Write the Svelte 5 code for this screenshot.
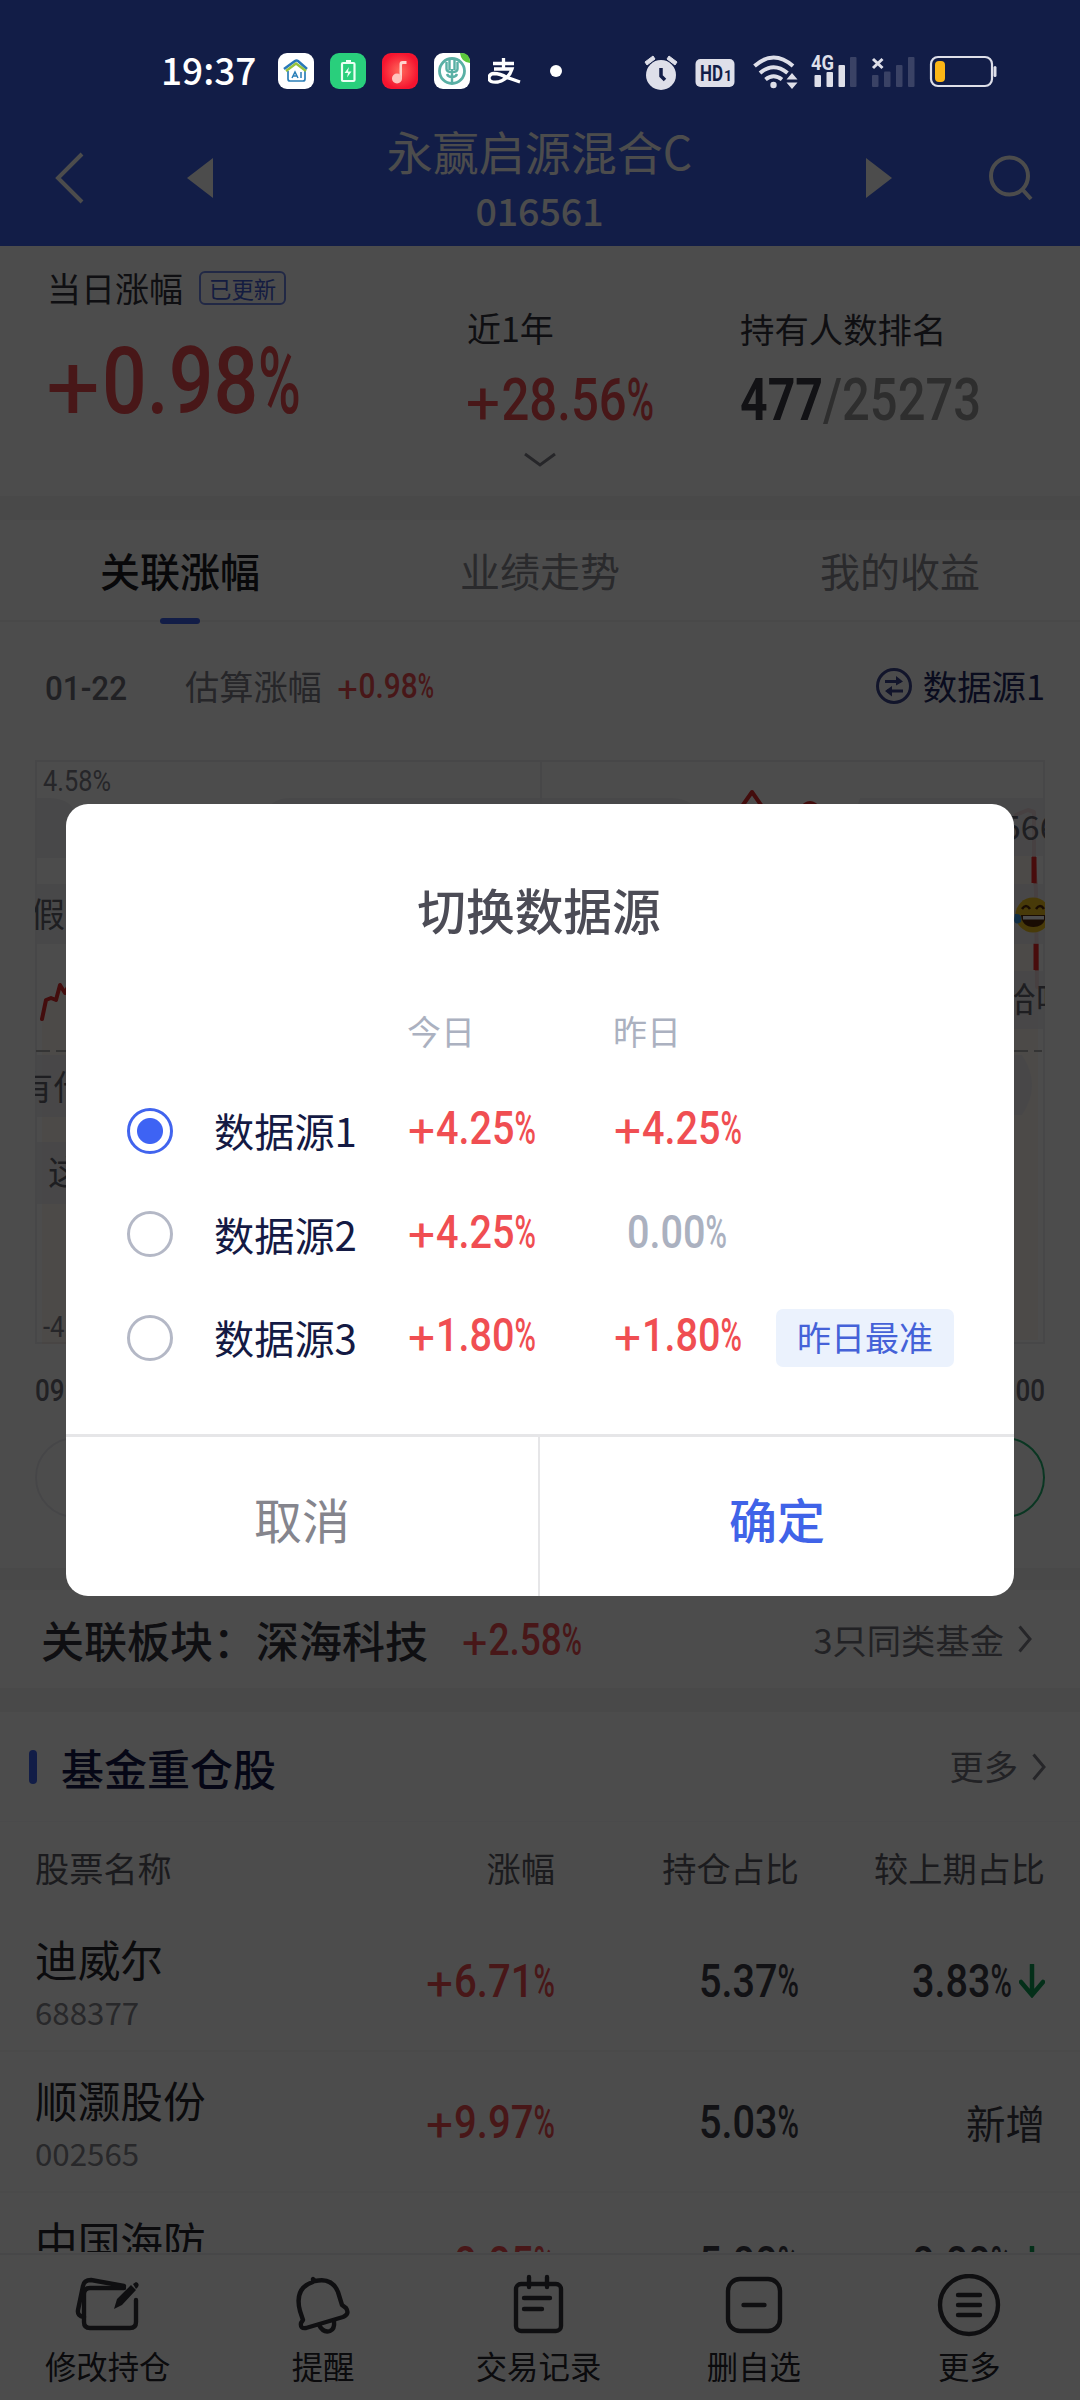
<script>
  const tabs = ['关联涨幅', '业绩走势', '我的收益'];

  const sources = [
    { name: '数据源1', today: '+4.25%', yesterday: '+4.25%', on: true },
    { name: '数据源2', today: '+4.25%', yesterday: '0.00%', flat: true },
    { name: '数据源3', today: '+1.80%', yesterday: '+1.80%', best: true }
  ];

  const stocks = [
    { name: '迪威尔', code: '688377', change: '+6.71%', share: '5.37%', delta: '3.83%' },
    { name: '顺灏股份', code: '002565', change: '+9.97%', share: '5.03%' },
    { name: '中国海防', code: '600764', change: '+0.05%', share: '5.00%', delta: '0.00%' }
  ];

  // Splits a figure into sign, digits and percent mark, each with its own slot width.
  function parts(text, w, h) {
    const sign = text[0] === '+' ? h * 0.82 : 0;
    const pct = text.endsWith('%') ? h * 0.65 : 0;
    return { sign, pct, mid: w - sign - pct, digits: text.replace('+', '').replace('%', '') };
  }
</script>

<!-- Condensed figure: digits set to an exact width and cap height -->
{#snippet fig(text, w, h, cls)}
  {@const p = parts(text, w, h)}
  <svg class="fig {cls}" width={w} height={h} font-size={h / 0.711}>
    {#if p.sign}<text class="sign" x={-h * 0.03} y={h * 1.1} textLength={p.sign} lengthAdjust="spacingAndGlyphs">+</text>{/if}
    <text x={p.sign} y={h} textLength={p.mid} lengthAdjust="spacingAndGlyphs">{p.digits}</text>
    {#if p.pct}<text x={w - p.pct} y={h} textLength={p.pct} lengthAdjust="spacingAndGlyphs">%</text>{/if}
  </svg>
{/snippet}

{#snippet chevron()}
  <svg class="chev" width="14" height="28" viewBox="0 0 14 28"><path d="M1.5 1.5 12 14 1.5 26.5" /></svg>
{/snippet}

<div class="screen">
  <div class="status">
    <span class="time">19:37</span>
    <div class="apps">
      <svg width="36" height="36" viewBox="0 0 36 36">
        <rect width="36" height="36" rx="9" fill="#fff" />
        <path d="M10 18v8q0 2 2 2h13q2 0 2-2v-8" fill="none" stroke="#2b7fb8" stroke-width="1.7" />
        <path d="M6 16 17 8q1.500-1 3 0l9 8" fill="none" stroke="#2878b8" stroke-width="2.600" />
        <path d="M8 18 18 10.500 28 18" fill="none" stroke="#96c23c" stroke-width="2.400" />
        <path d="m14 25 3-6 3 6m-5-2h4m4-4v6" fill="none" stroke="#2b7fb8" stroke-width="1.500" />
      </svg>
      <svg width="36" height="36" viewBox="0 0 36 36">
        <rect width="36" height="36" rx="9" fill="#29cf7c" />
        <path d="M16 7h5v3h-5z" fill="#e9fff3" />
        <rect x="12" y="10" width="12.500" height="18" rx="1" fill="none" stroke="#e9fff3" stroke-width="2.200" />
        <path d="m19 14-4.500 6H18l-1 4.500 4.500-6H18z" fill="#e9fff3" />
      </svg>
      <svg width="36" height="36" viewBox="0 0 36 36">
        <defs>
          <radialGradient id="music"><stop offset="0" stop-color="#ff6a5c" /><stop offset="1" stop-color="#f5142f" /></radialGradient>
        </defs>
        <rect width="36" height="36" rx="9" fill="url(#music)" />
        <path d="M17.500 26V11q0-3 3-3h4v3h-3.500q-1 0-1 1v14z" fill="#ffd3cd" />
        <circle cx="15" cy="25.500" r="5" fill="#ffc4bd" />
      </svg>
      <svg width="36" height="36" viewBox="0 0 36 36">
        <rect width="36" height="36" rx="9" fill="#fff" />
        <path d="M26 0h1q9 0 9 9v1q-9-1-10-10" fill="#5cc83c" />
        <circle cx="18" cy="18" r="12.500" fill="none" stroke="#5ab0a5" stroke-width="2.800" />
        <path d="M15.500 5v12M20.500 5v12M18 16v15M12.500 9v7q0 3 5.500 3t5.500-3V9M13 21q1 3 5 3t5-3" fill="none" stroke="#5ab0a5" stroke-width="2.400" />
      </svg>
    </div>
    <svg class="pay" width="34" height="26" viewBox="0 0 34 26">
      <path d="M5 5.500h21M15.500 0v11M6 11h18q-3 10-14 13-9 1-9-4 0-4 5-4.500 6 0 13 4l13 4.500" />
    </svg>
    <i class="dot"></i>
    <svg class="sys" width="360" height="40" viewBox="640 50 360 40">
      <g fill="#dedfe9">
        <circle cx="661" cy="74" r="15" />
        <path d="m645 61 8-6 2 3-8 6zM677 61l-8-6-2 3 8 6z" stroke="#dedfe9" />
        <rect x="695.500" y="58" width="39" height="28" rx="5" />
        <circle cx="773.500" cy="84" r="3.200" />
        <path d="m792 72 5.500 6.500h-11zM792 88l5.500-6.500h-11z" />
        <rect x="814.500" y="74" width="6.500" height="12" rx="1" />
        <rect x="826.500" y="71" width="6.500" height="15" rx="1" />
        <rect x="838.500" y="64" width="6.500" height="22" rx="1" />
        <rect x="993.500" y="65" width="3" height="11" rx="1.500" />
      </g>
      <path d="M661 67v8l4 4" fill="none" stroke="#121d47" stroke-width="3.500" />
      <g fill="none" stroke="#dedfe9" stroke-width="4">
        <path d="M754.500 65q19-17 38.500 0M760 72q13.500-11.500 27.500 0M765.500 78.500q8-6.500 16.500 0" />
        <path d="m873 58 9.500 9M882.500 58l-9.500 9" stroke-width="3" />
        <rect x="931" y="56" width="61" height="29" rx="7" stroke-width="2.200" />
      </g>
      <g fill="#3a4265">
        <rect x="850" y="56" width="6.500" height="30" rx="1" />
        <rect x="872" y="74" width="6.500" height="12" rx="1" />
        <rect x="884" y="70.500" width="6.500" height="15.500" rx="1" />
        <rect x="896" y="64" width="6.500" height="22" rx="1" />
        <rect x="908" y="56" width="6.500" height="30" rx="1" />
      </g>
      <rect x="935" y="60" width="10" height="21" rx="4" fill="#fdb716" />
      <text class="hd" x="700" y="80" font-size="22" textLength="23" lengthAdjust="spacingAndGlyphs">HD</text>
      <text class="hd" x="724" y="80" font-size="14">1</text>
      <text class="net" x="811" y="69" font-size="20" textLength="23" lengthAdjust="spacingAndGlyphs">4G</text>
    </svg>
  </div>

  <header>
    <svg width="30" height="54" viewBox="0 0 30 54"><path class="line" d="M27 3 3 27 27 51" /></svg>
    <svg class="prev" width="26" height="40"><path fill="#fff" d="M26 0v40L0 20z" /></svg>
    <div class="title">
      <h1>永赢启源混合C</h1>
      <p>016561</p>
    </div>
    <svg class="next" width="26" height="40"><path fill="#fff" d="M0 0v40l26-20z" /></svg>
    <svg width="44" height="46" viewBox="0 0 44 46"><circle class="line" cx="20.500" cy="21" r="18.500" /><path class="line" d="m33 34 9 10" /></svg>
  </header>

  <section class="stats">
    <div class="stat main">
      <div class="label">当日涨幅<span class="badge">已更新</span></div>
      {@render fig('+0.98%', 253, 66, 'red')}
    </div>
    <div class="stat year">
      <div class="label">近1年</div>
      {@render fig('+28.56%', 187, 42, 'red')}
    </div>
    <div class="stat rank">
      <div class="label">持有人数排名</div>
      <div class="pair">{@render fig('477', 83, 42, 'ink bold')}{@render fig('/25273', 158, 42, 'mute')}</div>
    </div>
    <svg class="down" width="34" height="16" viewBox="0 0 34 16"><path d="m2 2 15 11L32 2" /></svg>
  </section>

  <div class="band"></div>

  <nav class="tabs">
    {#each tabs as tab, i}
      <span class:active={i === 0}>{tab}</span>
    {/each}
  </nav>

  <div class="estimate">
    {@render fig('01-22', 82, 24, 'date low')}
    <span class="est">估算涨幅</span>
    {@render fig('+0.98%', 96, 25, 'red')}
    <span class="source">
      <svg width="36" height="36" viewBox="0 0 36 36">
        <circle cx="18" cy="18" r="16.500" />
        <path d="M9 13.500h16M27 23H11" />
        <path class="solid" d="m20 8 7 5.500-7 4zM16 18l-7 5 7 5.500z" />
      </svg>
      数据源1
    </span>
  </div>

  <div class="chart">
    <svg width="1010" height="584" viewBox="35 760 1010 584">
      <rect class="grid" x="36" y="761" width="1008" height="582" />
      <path class="grid" d="M541 761v582" />
      <path d="M42 1020l4-20 10 0 4-16 6 8v352H42zM1014 830l16-20 8 180v350h-24z" fill="#ff8a3c" opacity=".07" />
      <path class="curve" d="m42 1019 4-19 5-2 5 2 4-15 5 8 4-8M738 812l14-20 14 20M800 810q10-14 20 0" />
      <path class="curve soft" d="M1016 815l12-5 6 2v50l2 30 1 95" />
      <path d="M1034 857v26M1036 943v27" stroke="#f02828" stroke-width="5" />
      <path d="M36 1051h30M1014 1051h28" stroke="#b0b0b0" stroke-width="2" stroke-dasharray="14 6" />
      <g class="bubble">
        <path d="M36 798h12q20 0 26 12v48H36zM290 798h380q20 0 26 12H266q8-12 24-12zM860 798h184v58H840zM36 884h50v60H36zM1000 884h44v60h-44zM990 971h54v58h-54zM36 1055h50v62H36zM36 1142h50v62H36zM990 1055h32q20 30 0 60h-32z" />
      </g>
      <g class="danmu">
        <text x="1002" y="840">566</text>
        <text x="31" y="927">假的</text>
        <text x="1002" y="1012">哈哈</text>
        <text x="19" y="1100">有什么</text>
        <text x="48" y="1185">这个</text>
      </g>
      <g>
        <circle cx="1033" cy="915" r="17.500" fill="#f2c41f" />
        <path d="M1021 915h25q-1 12-12.500 12T1021 915" fill="#54280c" />
        <path d="M1023 916h21v3.500h-21z" fill="#fff" />
        <path d="M1022 909q4-6 8 0M1036 909q4-6 8 0" fill="none" stroke="#54280c" stroke-width="2.500" />
        <path d="M1015 914q8-1 6 8-6 4-7-2z" fill="#3f9be8" />
      </g>
      <text class="axis" x="43" y="791" textLength="68" lengthAdjust="spacingAndGlyphs">4.58%</text>
      <text class="axis" x="43" y="1337" textLength="76" lengthAdjust="spacingAndGlyphs">-4.58%</text>
    </svg>
    <div class="hours">{@render fig('09:30', 66, 22, 'date')}{@render fig('15:00', 66, 22, 'date')}</div>
    <div class="pills"><i></i><i class="green"></i></div>
  </div>

  <div class="band thin"></div>

  <section class="sector">
    <b>关联板块：深海科技</b>
    {@render fig('+2.58%', 119, 31, 'red')}
    <span>3只同类基金</span>
    {@render chevron()}
  </section>

  <div class="band"></div>

  <section class="heading">
    <i></i>
    <b>基金重仓股</b>
    <span>更多</span>
    {@render chevron()}
  </section>

  <section class="table">
    <div class="row head"><span>股票名称</span><span>涨幅</span><span>持仓占比</span><span>较上期占比</span></div>
    {#each stocks as s}
      <div class="row">
        <div class="name">{s.name}<small>{s.code}</small></div>
        {@render fig(s.change, 128, 33, 'red')}
        {@render fig(s.share, 100, 33, 'ink')}
        <div class="delta">
          {#if s.delta}
            {@render fig(s.delta, 100, 33, 'ink')}
            <svg class="arrow" width="26" height="34" viewBox="0 0 26 34"><path d="M13 1v30M2 18l11 13 11-13" /></svg>
          {:else}
            新增
          {/if}
        </div>
      </div>
    {/each}
  </section>

  <footer>
    <div>
      <svg width="72" height="64" viewBox="72 2273 72 64">
        <path d="M124 2287H90q-6 0-6 6v28q0 6 6 6h40q6 0 6-6v-22" />
        <path d="m84 2316q-7-1-6-7l5-24q1-6 8-6l33 6" />
        <path class="solid" d="m114 2308 3-10 14-14 5 5-14 15zM133 2283l3-2q4 1 2 5l-2 2z" />
      </svg>
      修改持仓
    </div>
    <div>
      <svg width="64" height="64" viewBox="293 2273 64 64">
        <path d="M315 2278v3q-19 6-13 29l3 9-2 3q-1 6 5 5l37-11q7-3 3-9l-4-3-4-13q-6-15-23-11z" />
        <path d="M321 2324q4 8 11 6 5-2 4-10" />
      </svg>
      提醒
    </div>
    <div>
      <svg width="64" height="64" viewBox="508 2273 64 64">
        <rect x="518" y="2283" width="45" height="47" rx="5" />
        <path d="M531 2276v10M549 2276v10M526 2297h26M526 2308h18" />
      </svg>
      交易记录
    </div>
    <div>
      <svg width="64" height="64" viewBox="724 2274 64 64">
        <rect x="730" y="2279" width="52" height="52" rx="12" />
        <path d="M745.500 2305h21" />
      </svg>
      删自选
    </div>
    <div>
      <svg width="64" height="64" viewBox="940 2274 64 64">
        <circle cx="972" cy="2305" r="29" />
        <path d="M961 2295h22M961 2305h22M961 2315h22" />
      </svg>
      更多
    </div>
  </footer>

  <div class="overlay"></div>

  <div class="modal">
    <h2>切换数据源</h2>
    <div class="opt cols"><span></span><span></span><span>今日</span><span>昨日</span></div>
    {#each sources as s}
      <div class="opt">
        <i class="radio" class:on={s.on}></i>
        <b>{s.name}</b>
        {@render fig(s.today, 127, 33, 'red')}
        {#if s.flat}
          <span class="flat">{@render fig(s.yesterday, 100, 33, 'pale')}</span>
        {:else}
          {@render fig(s.yesterday, 127, 33, 'red')}
        {/if}
        {#if s.best}<em>昨日最准</em>{/if}
      </div>
    {/each}
    <div class="actions"><button>取消</button><button class="ok">确定</button></div>
  </div>
</div>

<style>
  :global(body) { margin: 0; }
  .screen {
    position: relative;
    width: 1080px;
    height: 2400px;
    overflow: hidden;
    display: flex;
    flex-direction: column;
    background: #fff;
    color: #34343c;
    font-family: 'Noto Sans CJK SC', 'Noto Sans', sans-serif;
    font-size: 34px;
    line-height: 1;
  }
  .screen * { box-sizing: border-box; }
  svg { display: block; flex: none; }
  h1, h2, p { margin: 0; font-weight: 400; }
  i, em { font-style: normal; }
  b { font-weight: 500; }

  .fig { overflow: visible; font-family: Roboto, sans-serif; font-weight: 500; }
  .sign { font-weight: 400; }
  .red { fill: #f04e52; }
  .ink { fill: #3c3c48; }
  .bold { font-weight: 700; }
  .mute { fill: #9b9b9b; }
  .date { fill: #70707a; }
  .low { margin-top: 4px; }
  .pale { fill: #abb1c0; }

  .status {
    position: absolute;
    inset: 0 0 auto;
    z-index: 2;
    height: 142px;
    padding-left: 161px;
    display: flex;
    align-items: center;
    color: #fff;
  }
  .time { width: 117px; font-size: 37px; font-weight: 500; padding-bottom: 3px; }
  .apps { display: flex; gap: 16px; }
  .pay { margin-left: 18px; fill: none; stroke: #fff; stroke-width: 3.300; }
  .dot { width: 12px; height: 12px; margin: 0 78px 0 28px; border-radius: 50%; background: #fff; }
  .hd { font-family: Roboto, sans-serif; font-weight: 700; fill: #121d47; }
  .net { font-family: Roboto, sans-serif; font-weight: 700; fill: #dedfe9; }

  header {
    height: 246px;
    flex: none;
    padding: 110px 47px 0 55px;
    display: flex;
    align-items: center;
    background: #3c61ed;
    color: #fff;
  }
  .prev { margin-left: 102px; }
  .title { flex: 1; text-align: center; padding-top: 3px; }
  h1 { font-size: 46px; line-height: 60px; }
  .title p { font-size: 37.500px; line-height: 60px; font-weight: 500; }
  .next { margin-right: 97px; }
  .line { fill: none; stroke: #fff; stroke-width: 4; }

  .stats {
    position: relative;
    height: 250px;
    flex: none;
    display: grid;
    grid-template-columns: 419px 273px 1fr;
    padding-left: 48px;
  }
  .stat { padding-top: 65px; }
  .stat.main { padding-top: 25px; }
  .label { display: flex; align-items: center; height: 34px; margin-bottom: 33px; }
  .rank .label { font-size: 34.400px; }
  .main .label { margin: 0 0 42px -1px; }
  .badge {
    height: 34px;
    margin-left: 16px;
    padding: 0 8px;
    border: 2px solid #6f86e8;
    border-radius: 6px;
    font-size: 22.400px;
    line-height: 30px;
    color: #4560d8;
  }
  .pair { display: flex; }
  .down { position: absolute; left: 523px; top: 206px; fill: none; stroke: #80808a; stroke-width: 3; }

  .band { height: 24px; flex: none; background: #f4f4f6; }
  .thin { height: 22px; }

  .tabs {
    height: 102px;
    flex: none;
    display: grid;
    grid-template-columns: repeat(3, 1fr);
    border-bottom: 2px solid #f4f4f6;
    font-size: 40px;
    line-height: 101px;
    text-align: center;
    color: #8c8c94;
  }
  .active { position: relative; font-weight: 500; color: #1c1c24; }
  .active::after {
    content: '';
    position: absolute;
    left: 160px;
    bottom: -3px;
    width: 40px;
    height: 6px;
    border-radius: 3px;
    background: #3c61ed;
  }

  .estimate { height: 138px; flex: none; display: flex; align-items: center; padding: 0 35px 11px 45px; color: #80808a; }
  .est { margin: 0 16px 0 58px; font-size: 34.200px; }
  .source { margin-left: auto; display: flex; align-items: center; gap: 11px; font-size: 34.400px; color: #222a66; }
  .source svg { fill: none; stroke: #3c4690; stroke-width: 3; }
  .source .solid { fill: #3c4690; stroke: none; }

  .chart { height: 808px; flex: none; padding: 0 35px; }
  .grid { fill: none; stroke: #efeff2; stroke-width: 2; }
  .curve { fill: none; stroke: #e02c2c; stroke-width: 4; stroke-linejoin: round; stroke-linecap: round; }
  .soft { opacity: .45; }
  .bubble { fill: #ececf0; opacity: .75; }
  .danmu { font-size: 34px; fill: #66666e; }
  .axis { font-family: Roboto, sans-serif; font-size: 30px; fill: #80808a; }
  .hours { display: flex; justify-content: space-between; padding-top: 35px; }
  .pills { display: flex; justify-content: space-between; padding-top: 36px; }
  .pills i { width: 300px; height: 81px; border: 2px solid #ececf0; border-radius: 41px; }
  .pills .green { border-color: #22b573; }

  .sector, .heading { display: flex; align-items: center; flex: none; }
  .sector { height: 98px; padding: 0 48px 0 41px; }
  .sector b, .heading b { font-size: 43px; }
  .sector .fig { margin-left: 35px; }
  .sector span, .heading span { margin-left: auto; font-size: 34.300px; color: #74747c; }
  .chev { margin-left: 14px; fill: none; stroke: #80808a; stroke-width: 3; }
  .heading { height: 110px; padding: 0 34px 0 29px; border-bottom: 1px solid #f8f8fa; }
  .heading i { width: 8px; height: 34px; margin-right: 24px; border-radius: 4px; background: #3c61ed; }
  .heading b { color: #141a4c; padding-top: 2px; }
  .heading span { padding-bottom: 2px; }

  .table { flex: none; height: 430px; overflow: hidden; }
  .row {
    height: 141px;
    display: grid;
    grid-template-columns: 330px 190px 244px 246px;
    align-items: center;
    justify-items: end;
    padding: 0 35px;
    border-bottom: 2px solid #f7f7f9;
  }
  .row.head { height: 89px; padding-top: 1px; border: 0; font-size: 34.200px; color: #5c5c64; }
  .row > :first-child { justify-self: start; }
  .name { font-size: 42.700px; color: #26262e; padding-top: 3px; }
  .name small { display: block; margin-top: 16px; font-size: 31.300px; color: #85858c; }
  .delta { display: flex; align-items: center; gap: 7px; font-size: 39.500px; color: #3c3c48; }
  .arrow { fill: none; stroke: #0f9f55; stroke-width: 4.500; stroke-linecap: round; }

  footer {
    position: absolute;
    inset: auto 0 0;
    height: 147px;
    display: grid;
    grid-template-columns: repeat(5, 1fr);
    padding: 19px 3px 0 0;
    border-top: 2px solid #eeeef0;
    background: #fff;
    font-size: 31.400px;
    color: #26262e;
  }
  footer div { display: flex; flex-direction: column; align-items: center; gap: 12px; }
  footer svg { fill: none; stroke: #34343a; stroke-width: 4.400; stroke-linecap: round; stroke-linejoin: round; }
  footer .solid { fill: #34343a; stroke: none; }

  .overlay { position: absolute; inset: 0; background: rgba(0, 0, 0, .7); }

  .modal {
    position: absolute;
    left: 66px;
    top: 804px;
    width: 948px;
    height: 792px;
    display: flex;
    flex-direction: column;
    border-radius: 22px;
    overflow: hidden;
    background: #fff;
  }
  h2 { padding: 81px 2px 62px 0; font-size: 48.700px; font-weight: 500; line-height: 49px; text-align: center; color: #4c4c56; }
  .opt {
    height: 103.500px;
    display: grid;
    grid-template-columns: 87px 193px 206px 159px auto;
    align-items: center;
    justify-content: start;
    padding-left: 61px;
  }
  .opt.cols { height: 84px; color: #abb1c0; padding-bottom: 15px; }
  .opt b { font-size: 40.200px; font-weight: 400; color: #141a44; padding-bottom: 3px; }
  .opt .fig { margin-top: -8px; margin-left: 2px; }
  .flat { padding-left: 12px; }
  .radio { width: 46px; height: 46px; margin-top: -2px; border: 3px solid #b4b8c6; border-radius: 50%; }
  .on { border-color: #4164ee; background: radial-gradient(circle, #3e63f4 12.500px, #fff 13.500px); }
  .opt em {
    height: 58px;
    padding: 0 21px;
    border-radius: 7px;
    background: #ebf2fd;
    color: #4562d8;
    line-height: 56px;
    margin: -1px 0 0 4px;
  }
  .actions {
    height: 162px;
    margin-top: auto;
    display: grid;
    grid-template-columns: 474px 1fr;
    border-top: 3px solid #e6e6e8;
  }
  button { padding: 2px 0 0; border: 0; border-right: 2px solid #e6e6e8; background: none; font: inherit; font-size: 48px; font-weight: 400; color: #85858d; }
  .ok { border: 0; font-weight: 500; color: #4063e8; }
</style>
